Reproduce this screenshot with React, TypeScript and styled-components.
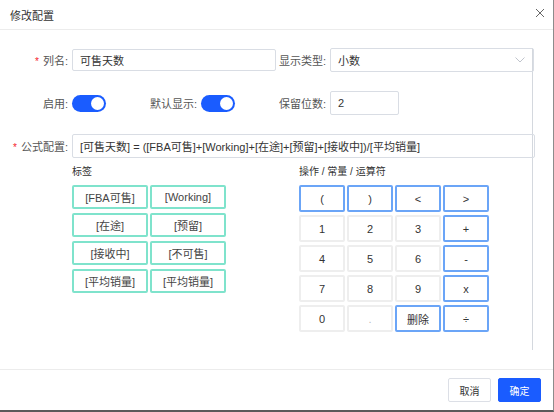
import styled, { createGlobalStyle } from "styled-components";

const Global = createGlobalStyle`
  html, body { margin: 0; padding: 0; background: #fff; }
  * { box-sizing: border-box; }
  body { font-family: "Liberation Sans", "Noto Sans CJK SC", sans-serif; color: #333; }
`;

const font = `"Liberation Sans", "Noto Sans CJK SC", sans-serif`;

const Components = {
  Modal: styled.div`
    width: 554px;
    height: 412px;
    display: flex;
    flex-direction: column;
    border-right: 1px solid #8c8c8c;
    border-bottom: 2px solid #5a5a5a;
    background: #fff;
  `,
  Header: styled.div`
    height: 30px;
    flex: none;
    display: flex;
    align-items: center;
    justify-content: space-between;
    padding: 0 8px 0 10px;
    border-bottom: 1px solid #ececec;
  `,
  Title: styled.span`
    font-size: 11px;
    color: #333;
    font-family: ${font};
  `,
  Close: styled.span`
    display: flex;
    width: 10px;
    height: 10px;
    margin-top: -4px;
  `,
  Body: styled.div`
    flex: 1;
    padding-top: 18px;
  `,
  Scroll: styled.div`
    width: 533px;
    height: 302px;
    border-right: 1px solid #d4d8de;
    display: flex;
    flex-direction: column;
    gap: 19px;
  `,
  Row: styled.div`
    display: flex;
    align-items: center;
    height: 24px;
  `,
  Label: styled.label<{ $w: number }>`
    width: ${(p) => p.$w}px;
    flex: none;
    text-align: right;
    font-size: 11px;
    color: #555;
    padding-right: 4px;
    font-family: ${font};
    white-space: nowrap;
  `,
  Star: styled.span`
    color: #f5222d;
    margin-right: 4px;
    font-size: 10px;
  `,
  Input: styled.div<{ $w: number; $h?: number }>`
    width: ${(p) => p.$w}px;
    height: ${(p) => p.$h ?? 24}px;
    flex: none;
    border: 1px solid #d9dde4;
    border-radius: 2px;
    display: flex;
    align-items: center;
    justify-content: space-between;
    padding: 0 8px 0 7px;
    font-size: 11px;
    color: #333;
    font-family: ${font};
    white-space: nowrap;
  `,
  Switch: styled.span`
    width: 34px;
    height: 17px;
    flex: none;
    border-radius: 9px;
    background: #1a5cff;
    position: relative;
    &::after {
      content: "";
      position: absolute;
      right: 2px;
      top: 2px;
      width: 13px;
      height: 13px;
      border-radius: 50%;
      background: #fff;
    }
  `,
  Tools: styled.div`
    display: flex;
    margin-top: -12px;
  `,
  Panel: styled.div<{ $left: number }>`
    margin-left: ${(p) => p.$left}px;
    display: flex;
    flex-direction: column;
    gap: 6px;
  `,
  PanelTitle: styled.div`
    height: 14px;
    line-height: 14px;
    font-size: 10px;
    color: #333;
    font-family: ${font};
  `,
  TagGrid: styled.div`
    display: grid;
    grid-template-columns: repeat(2, 76px);
    grid-auto-rows: 24px;
    column-gap: 2px;
    row-gap: 4px;
  `,
  Tag: styled.button`
    border: 2px solid #7fe3cc;
    border-radius: 2px;
    background: #fff;
    font-size: 11px;
    color: #444;
    font-family: ${font};
    padding: 0;
  `,
  OpGrid: styled.div`
    display: grid;
    grid-template-columns: repeat(4, 46px);
    grid-auto-rows: 27px;
    column-gap: 2px;
    row-gap: 3px;
  `,
  Op: styled.button<{ $kind: "blue" | "plain" | "faint" }>`
    border: 2px solid ${(p) => (p.$kind === "blue" ? "#6ba5f7" : "#eeeeee")};
    border-radius: 2px;
    background: #fff;
    font-size: 11px;
    color: ${(p) => (p.$kind === "faint" ? "#bbb" : "#333")};
    font-family: ${font};
    padding: 0;
  `,
  Footer: styled.div`
    height: 41px;
    flex: none;
    border-top: 1px solid #ececec;
    display: flex;
    justify-content: flex-end;
    align-items: flex-start;
    gap: 7px;
    padding: 8px 12px 0 0;
  `,
  Button: styled.button<{ $primary?: boolean }>`
    width: 43px;
    height: 24px;
    border-radius: 2px;
    border: 1px solid ${(p) => (p.$primary ? "#1a5cff" : "#dcdfe6")};
    background: ${(p) => (p.$primary ? "#1a5cff" : "#fff")};
    color: ${(p) => (p.$primary ? "#fff" : "#333")};
    font-size: 10px;
    font-family: ${font};
    padding: 0;
  `,
};

const tags = ["[FBA可售]", "[Working]", "[在途]", "[预留]", "[接收中]", "[不可售]", "[平均销量]", "[平均销量]"];

const ops: { t: string; k: "blue" | "plain" | "faint" }[] = [
  { t: "(", k: "blue" }, { t: ")", k: "blue" }, { t: "<", k: "blue" }, { t: ">", k: "blue" },
  { t: "1", k: "plain" }, { t: "2", k: "plain" }, { t: "3", k: "plain" }, { t: "+", k: "blue" },
  { t: "4", k: "plain" }, { t: "5", k: "plain" }, { t: "6", k: "plain" }, { t: "-", k: "blue" },
  { t: "7", k: "plain" }, { t: "8", k: "plain" }, { t: "9", k: "plain" }, { t: "x", k: "blue" },
  { t: "0", k: "plain" }, { t: ".", k: "faint" }, { t: "删除", k: "blue" }, { t: "÷", k: "blue" },
];

export default function App() {
  return (
    <>
      <Global />
      <Components.Modal>
        <Components.Header>
          <Components.Title>修改配置</Components.Title>
          <Components.Close>
            <svg width="10" height="10" viewBox="0 0 10 10">
              <path d="M1 1L9 9M9 1L1 9" stroke="#666" strokeWidth="1" />
            </svg>
          </Components.Close>
        </Components.Header>
        <Components.Body>
          <Components.Scroll>
            <Components.Row>
              <Components.Label $w={72}><Components.Star>*</Components.Star>列名:</Components.Label>
              <Components.Input $w={204} $h={22}>可售天数</Components.Input>
              <Components.Label $w={54}>显示类型:</Components.Label>
              <Components.Input $w={204}>
                小数
                <svg width="10" height="6" viewBox="0 0 10 6">
                  <path d="M0.5 0.5L5 5L9.5 0.5" stroke="#c0c4cc" strokeWidth="1" fill="none" />
                </svg>
              </Components.Input>
            </Components.Row>
            <Components.Row>
              <Components.Label $w={72}>启用:</Components.Label>
              <Components.Switch />
              <Components.Label $w={95}>默认显示:</Components.Label>
              <Components.Switch />
              <Components.Label $w={95}>保留位数:</Components.Label>
              <Components.Input $w={69}>2</Components.Input>
            </Components.Row>
            <Components.Row>
              <Components.Label $w={72}><Components.Star>*</Components.Star>公式配置:</Components.Label>
              <Components.Input $w={463}>[可售天数] = ([FBA可售]+[Working]+[在途]+[预留]+[接收中])/[平均销量]</Components.Input>
            </Components.Row>
            <Components.Tools>
              <Components.Panel $left={72}>
                <Components.PanelTitle>标签</Components.PanelTitle>
                <Components.TagGrid>
                  {tags.map((t, i) => (
                    <Components.Tag key={i}>{t}</Components.Tag>
                  ))}
                </Components.TagGrid>
              </Components.Panel>
              <Components.Panel $left={73}>
                <Components.PanelTitle>操作 / 常量 / 运算符</Components.PanelTitle>
                <Components.OpGrid>
                  {ops.map((o, i) => (
                    <Components.Op key={i} $kind={o.k}>{o.t}</Components.Op>
                  ))}
                </Components.OpGrid>
              </Components.Panel>
            </Components.Tools>
          </Components.Scroll>
        </Components.Body>
        <Components.Footer>
          <Components.Button>取消</Components.Button>
          <Components.Button $primary>确定</Components.Button>
        </Components.Footer>
      </Components.Modal>
    </>
  );
}
